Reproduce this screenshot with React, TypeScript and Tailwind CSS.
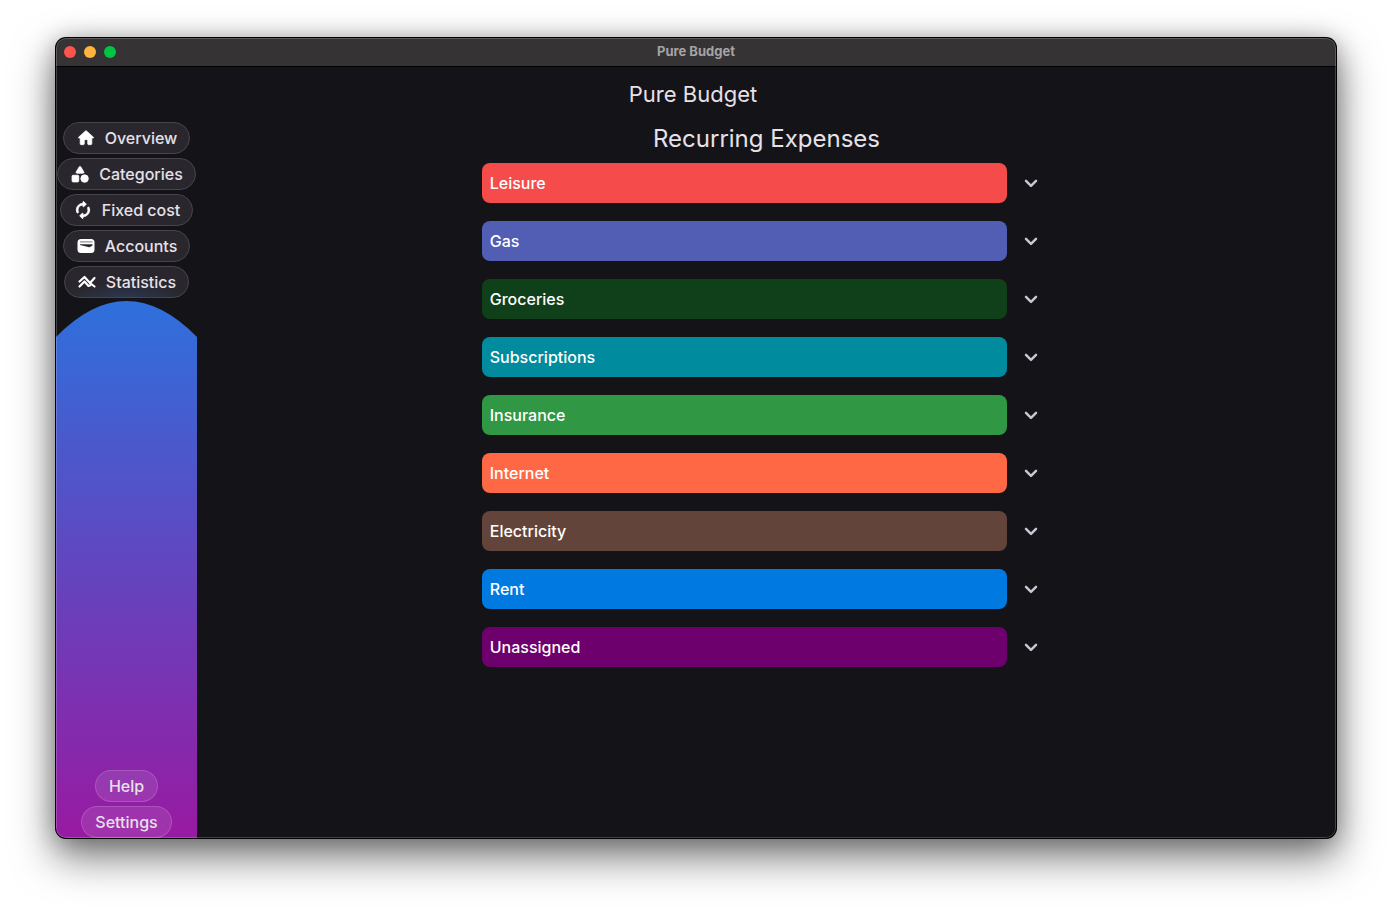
import type { ReactNode } from "react";

function HomeIcon() {
  return (
    <svg aria-hidden="true" viewBox="0 0 24 24" className="size-5 shrink-0 fill-white stroke-white" strokeWidth="0.8" strokeLinejoin="round">
      <path d="M10 19v-5h4v5c0 .55.45 1 1 1h3c.55 0 1-.45 1-1v-7h1.700c.46 0 .68-.57.33-.87L12.670 3.600c-.38-.34-.96-.34-1.340 0l-8.360 7.530c-.34.3-.13.87.33.87H5v7c0 .55.45 1 1 1h3c.55 0 1-.45 1-1z" />
    </svg>
  );
}

function ShapesIcon() {
  return (
    <svg aria-hidden="true" viewBox="0 0 24 24" className="size-5 shrink-0 fill-white stroke-white" strokeWidth="1" strokeLinejoin="round">
      <path d="M11.150 3.400 7.430 9.480c-.41.66.07 1.520.85 1.520h7.430c.78 0 1.260-.86.85-1.520L12.850 3.400c-.39-.64-1.310-.64-1.700 0z" />
      <circle cx="17.500" cy="17.500" r="4.500" />
      <path d="M3.500 21.500h6c.55 0 1-.45 1-1v-6c0-.55-.45-1-1-1h-6c-.55 0-1 .45-1 1v6c0 .55.45 1 1 1z" />
    </svg>
  );
}

function LoopIcon() {
  return (
    <svg aria-hidden="true" viewBox="0 0 24 24" className="size-5 shrink-0 fill-white stroke-white" strokeWidth="1" strokeLinejoin="round">
      <path d="M12 6v1.790c0 .45.54.67.85.35l2.790-2.790c.2-.2.2-.51 0-.71l-2.790-2.790c-.31-.31-.85-.09-.85.36V4c-4.420 0-8 3.580-8 8 0 1.040.2 2.040.57 2.950.27.67 1.130.85 1.640.34.27-.27.38-.68.23-1.040C6.150 13.560 6 12.790 6 12c0-3.310 2.690-6 6-6zm5.790 2.710c-.27.27-.38.69-.23 1.040.28.7.44 1.460.44 2.250 0 3.310-2.690 6-6 6v-1.790c0-.45-.54-.67-.85-.35l-2.790 2.790c-.2.2-.2.51 0 .71l2.790 2.790c.31.31.85.09.85-.35V20c4.420 0 8-3.580 8-8 0-1.040-.2-2.040-.57-2.950-.27-.67-1.130-.85-1.640-.34z" />
    </svg>
  );
}

function WalletIcon() {
  return (
    <svg aria-hidden="true" viewBox="0 0 20 20" className="size-5 shrink-0">
      <rect x="1.500" y="3" width="17" height="14" rx="3.500" fill="#fff" />
      <path d="M4 5.900h12.500" stroke="#77767a" strokeWidth="1" />
      <path d="M4 8.200h12.500v1.300l-2.500 1.500q-.9.400-1.900.1L4 8.900z" fill="#2a282e" />
    </svg>
  );
}

function StatsIcon() {
  return (
    <svg aria-hidden="true" viewBox="0 0 20 20" className="size-5 shrink-0" fill="none" stroke="#fff" strokeWidth="2.200" strokeLinecap="round" strokeLinejoin="round">
      <path d="M2.500 9.500 7.500 5l5.500 6 4.500-5" />
      <path d="M2.500 14.500 7.500 9.500l4 4.500Q13 14 14 12.500M13 11l4.500 3.500" />
    </svg>
  );
}

const navItems: { label: string; icon: ReactNode }[] = [
  { label: "Overview", icon: <HomeIcon /> },
  { label: "Categories", icon: <ShapesIcon /> },
  { label: "Fixed cost", icon: <LoopIcon /> },
  { label: "Accounts", icon: <WalletIcon /> },
  { label: "Statistics", icon: <StatsIcon /> },
];

const categories = [
  { label: "Leisure", color: "bg-[#f64b4b]" },
  { label: "Gas", color: "bg-[#515eb3]" },
  { label: "Groceries", color: "bg-[#10401a]" },
  { label: "Subscriptions", color: "bg-[#008c9e]" },
  { label: "Insurance", color: "bg-[#309845]" },
  { label: "Internet", color: "bg-[#ff6845]" },
  { label: "Electricity", color: "bg-[#63443a]" },
  { label: "Rent", color: "bg-[#007ae0]" },
  { label: "Unassigned", color: "bg-[#6d006d]" },
];

export default function App() {
  return (
    <div className="flex min-h-screen bg-white px-14 pt-[38px] pb-[74px] font-['Inter',sans-serif] text-[#e6e1e9]">
      <div className="relative flex flex-1 flex-col overflow-hidden rounded-[10px] bg-[#141318] shadow-[0_0_0_1px_#000,0_18px_40px_2px_rgba(0,0,0,0.5),0_2px_24px_rgba(0,0,0,0.28)]">
        <div className="grid h-[29px] grid-cols-[1fr_auto_1fr] items-center border-b border-black bg-[#353333] px-2">
          <div className="flex gap-2">
            <span className="size-3 rounded-full bg-[#ff544d]" />
            <span className="size-3 rounded-full bg-[#ffb43c]" />
            <span className="size-3 rounded-full bg-[#00c543]" />
          </div>
          <span className="text-[13px] font-bold text-[#a5a3a4]">Pure Budget</span>
        </div>
        <header className="flex h-[55px] items-center justify-center pr-1.5">
          <h1 className="text-[22px]">Pure Budget</h1>
        </header>
        <div className="flex flex-1">
          <aside className="flex w-[141px] flex-col">
            <nav className="flex flex-col items-center gap-1 pb-[3px]">
              {navItems.map((item) => (
                <button
                  key={item.label}
                  type="button"
                  className="flex h-8 items-center gap-[9px] rounded-full border border-[#47454b] bg-[#29272d] px-3 text-base font-medium last:bg-radial-[50%_45%_at_50%_100%] last:from-[#2b3650] last:to-[#29272d]"
                >
                  {item.icon}
                  {item.label}
                </button>
              ))}
            </nav>
            <div className="flex flex-1 flex-col justify-between bg-linear-to-b/srgb from-[#2e70dc] to-[#981aa2]">
              <svg aria-hidden="true" viewBox="0 0 141 36" preserveAspectRatio="none" className="h-9 w-full fill-[#141318]">
                <path d="M0 0H141V36Q70.500 -36 0 36Z" />
              </svg>
              <div className="flex flex-col items-center gap-1">
                {["Help", "Settings"].map((label) => (
                  <button key={label} type="button" className="h-8 rounded-full border border-white/15 bg-white/10 px-[13px] text-base font-medium">
                    {label}
                  </button>
                ))}
              </div>
            </div>
          </aside>
          <main className="flex flex-1 flex-col items-center">
            <h2 className="text-2xl leading-[34px]">Recurring Expenses</h2>
            <ul className="mt-[7px] flex w-1/2 flex-col gap-[18px]">
              {categories.map((category) => (
                <li key={category.label} className="flex items-center gap-1">
                  <div className={`flex h-10 flex-1 items-center rounded-lg px-2 text-base font-medium text-white ${category.color}`}>
                    {category.label}
                  </div>
                  <button type="button" aria-label={`Expand ${category.label}`} className="flex size-10 items-center justify-center">
                    <svg aria-hidden="true" viewBox="0 0 24 24" className="size-6 fill-none stroke-[#cac5d0]" strokeWidth="2.500" strokeLinecap="round" strokeLinejoin="round">
                      <path d="m7 9.800 5 5 5-5" />
                    </svg>
                  </button>
                </li>
              ))}
            </ul>
          </main>
        </div>
        <div className="pointer-events-none absolute inset-0 rounded-[10px] border border-white/20" />
      </div>
    </div>
  );
}
